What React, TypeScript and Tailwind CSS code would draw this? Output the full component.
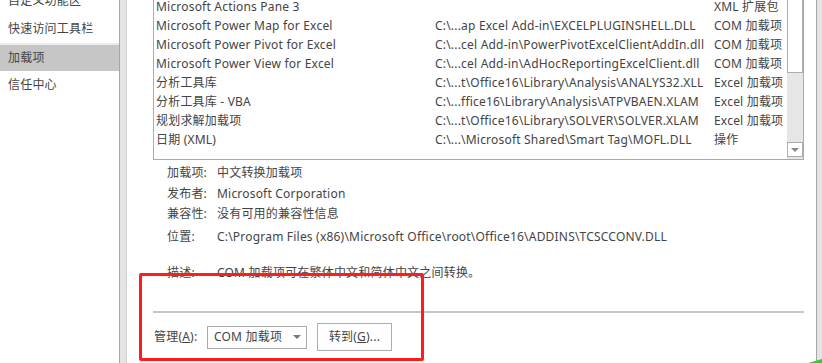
const rows = [
  { name: 'Microsoft Actions Pane 3', path: '', type: 'XML 扩展包' },
  { name: 'Microsoft Power Map for Excel', path: 'C:\\...ap Excel Add-in\\EXCELPLUGINSHELL.DLL', type: 'COM 加载项' },
  { name: 'Microsoft Power Pivot for Excel', path: 'C:\\...cel Add-in\\PowerPivotExcelClientAddIn.dll', type: 'COM 加载项' },
  { name: 'Microsoft Power View for Excel', path: 'C:\\...cel Add-in\\AdHocReportingExcelClient.dll', type: 'COM 加载项' },
  { name: '分析工具库', path: 'C:\\...t\\Office16\\Library\\Analysis\\ANALYS32.XLL', type: 'Excel 加载项' },
  { name: '分析工具库 - VBA', path: 'C:\\...ffice16\\Library\\Analysis\\ATPVBAEN.XLAM', type: 'Excel 加载项' },
  { name: '规划求解加载项', path: 'C:\\...t\\Office16\\Library\\SOLVER\\SOLVER.XLAM', type: 'Excel 加载项' },
  { name: '日期 (XML)', path: 'C:\\...\\Microsoft Shared\\Smart Tag\\MOFL.DLL', type: '操作' },
];

const menu = ['自定义功能区', '快速访问工具栏', '加载项', '信任中心'];

const details = [
  { label: '加载项:', value: '中文转换加载项', cls: 'mt-[3px]' },
  { label: '发布者:', value: 'Microsoft Corporation', cls: 'mt-[1px]' },
  { label: '兼容性:', value: '没有可用的兼容性信息', cls: '' },
  { label: '位置:', value: 'C:\\Program Files (x86)\\Microsoft Office\\root\\Office16\\ADDINS\\TCSCCONV.DLL', cls: 'mt-[3px]' },
  { label: '描述:', value: 'COM 加载项可在繁体中文和简体中文之间转换。', cls: 'mt-[16px]' },
];

export default function App() {
  return (
    <div className="relative flex w-[822px] h-[363px] overflow-hidden bg-white text-[12px] tracking-[0.2px] text-[#444] font-['Noto_Sans','Noto_Sans_CJK_SC',sans-serif]">
      {/* left nav */}
      <div className="w-[119px] shrink-0 -mt-[13px]">
        {menu.map(m => (
          <div
            key={m}
            className={`h-[28px] flex items-center pl-[8px] whitespace-nowrap ${m === '加载项' ? 'bg-[#c6c6c6] border-t-2 border-[#ececec]' : ''}`}
          >
            {m}
          </div>
        ))}
      </div>
      <div className="w-[8px] shrink-0 bg-[#e4e4e4] border-l border-[#a6a6a6] border-r border-r-[#d2d2d2]" />

      {/* main */}
      <div className="flex-1 flex flex-col pl-[26px] pr-[12px]">
        {/* list box */}
        <div className="flex h-[160px] w-[651px] border-x border-b border-[#ababab]">
          <div className="flex-1 overflow-hidden">
            <div className="-mt-[3px]">
              {rows.map(r => (
                <div key={r.name} className="flex h-[19px] items-center pl-[2px] whitespace-nowrap">
                  <div className="w-[279px] shrink-0">{r.name}</div>
                  <div className="w-[279px] shrink-0">{r.path}</div>
                  <div>{r.type}</div>
                </div>
              ))}
            </div>
          </div>
          <div className="w-[16px] shrink-0 flex flex-col bg-[#e6e6e6]">
            <div className="h-[73px] bg-white border-x border-b border-[#adadad]" />
            <div className="flex-1" />
            <div className="h-[15px] mb-[2px] bg-white border border-[#adadad] flex items-center justify-center">
              <svg width="8" height="4" viewBox="0 0 8 4"><polygon points="0,0 8,0 4,4" fill="#888" /></svg>
            </div>
          </div>
        </div>

        {/* details */}
        <div className="pl-[14px]">
          {details.map(d => (
            <div key={d.label} className={`flex h-[20px] items-center whitespace-nowrap ${d.cls}`}>
              <div className="w-[50px] shrink-0">{d.label}</div>
              <div>{d.value}</div>
            </div>
          ))}
        </div>

        <div className="mt-[28px] h-[2px] w-[651px] bg-[#c6c6c6]" />

        <div className="flex items-center mt-[10px] pl-[1px]">
          <span className="w-[53px]">管理(<span className="underline">A</span>):</span>
          <div className="flex items-center justify-between w-[100px] h-[23px] border border-[#ababab] pl-[6px] pr-[5px]">
            <span>COM 加载项</span>
            <svg width="8" height="4" viewBox="0 0 8 4"><polygon points="0,0 8,0 4,4" fill="#777" /></svg>
          </div>
          <button className="ml-[10px] w-[75px] h-[28px] border border-[#adadad] bg-white text-[#444]">
            转到(<span className="underline">G</span>)...
          </button>
        </div>
      </div>
      <div className="w-[6px] shrink-0 bg-[#e4e4e4] border-l border-[#a6a6a6]" />

      {/* red annotation */}
      <div className="absolute left-[139px] top-[273px] w-[285px] h-[88px] border-[3px] border-[#ff1c1c] rounded-[2px]" />
      <svg className="absolute right-0 bottom-0" width="14" height="4" viewBox="0 0 14 4">
        <polygon points="0,4 14,0 14,4" fill="#3cc43c" />
      </svg>
    </div>
  );
}
